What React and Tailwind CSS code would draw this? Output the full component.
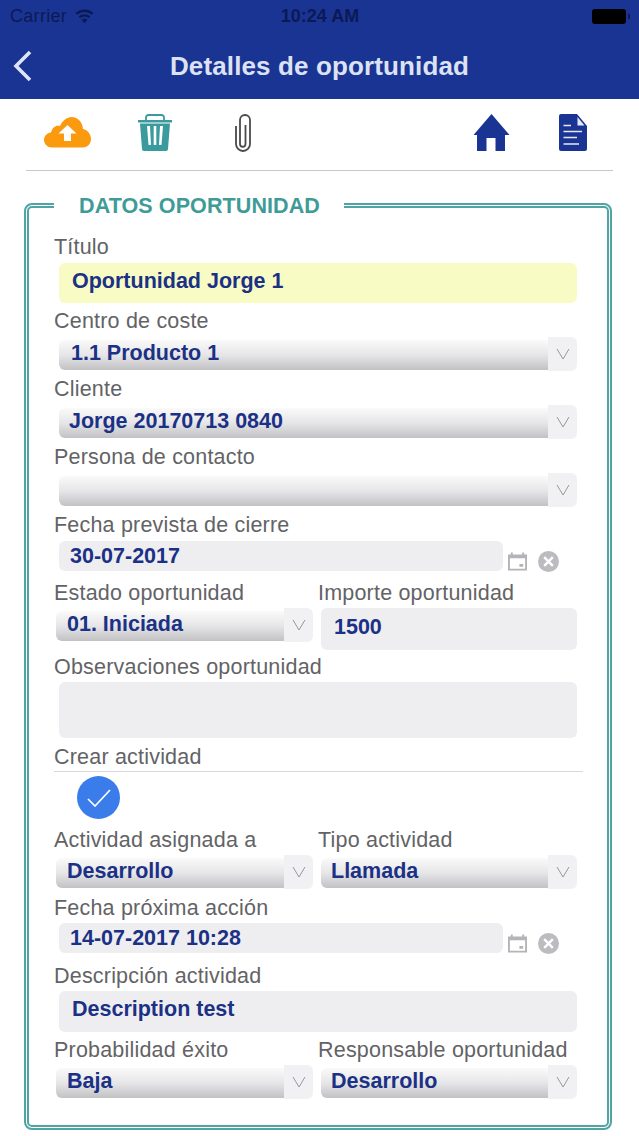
import React from 'react';

const Chevron = () => (
  <svg width="14" height="12" viewBox="0 0 14 12" fill="none" stroke="#97979c" strokeWidth="1">
    <path d="M1 1l6 10 6-10" />
  </svg>
);

const Label = ({ children, className = 'h-[34px] pt-[2px]' }) => (
  <div className={`flex items-center whitespace-nowrap text-[21.5px] tracking-[0.2px] text-[#636366] ${className}`}>{children}</div>
);

// gradient bar with the lighter chevron block on the right
const Select = ({ value, className = '', textClass = 'pl-3' }) => (
  <div className={`flex h-[34px] ${className}`}>
    <div className={`mb-[1px] mt-[3px] flex flex-1 items-center rounded-l-[6px] bg-gradient-to-b from-[#fafafa] via-[#e6e6e8] to-[#c2c2c5] pb-[4px] text-[21.5px] font-bold text-[#1b3185] ${textClass}`}>
      {value}
    </div>
    <div className="flex w-[29px] items-center justify-center rounded-r-[6px] bg-[#f1f0f3]">
      <Chevron />
    </div>
  </div>
);

const Input = ({ value, className = '', textClass = 'pl-[13px] pb-[4px]' }) => (
  <div className={`flex items-center rounded-[6px] bg-[#eeedf0] text-[21.5px] font-bold text-[#1b3185] ${textClass} ${className}`}>
    {value}
  </div>
);

const DateRow = ({ value }) => (
  <div className="flex h-[34px] items-start">
    <Input value={value} className="ml-[5px] h-[30px] w-[444px]" textClass="pl-[11px]" />
    <svg className="ml-[5px] mt-[11px]" width="19" height="19" viewBox="0 0 20 19" fill="#b4b4b8">
      <path d="M3 0h2v2h10V0h2v2h3v17H0V2h3zM2 6v11h16V6zm10 6h4v3h-4z" fillRule="evenodd" />
    </svg>
    <svg className="ml-[11px] mt-[10px]" width="21" height="21" viewBox="0 0 22 22">
      <circle cx="11" cy="11" r="11" fill="#bcbcc0" />
      <path d="M6.5 6.5l9 9M15.5 6.5l-9 9" stroke="#fff" strokeWidth="2.6" />
    </svg>
  </div>
);

export default function App() {
  return (
    <div className="h-[1136px] w-[639px] overflow-hidden bg-white font-['Liberation_Sans',Arial,sans-serif]">
      <header className="h-[99px] bg-[#1a3494]">
        <div className="grid h-[33px] grid-cols-3 items-center pl-[10px] pr-[9px] text-[#0b1a55]">
          <div className="flex items-center gap-[8px] text-[18px] tracking-[0.3px]">
            Carrier
            <svg width="19" height="15" viewBox="0 0 20 15" fill="#0b1a55">
              <path d="M10 14.5L7 11a4.4 4.4 0 0 1 6 0zM5.4 9.2L3.8 7.4a9.4 9.4 0 0 1 12.4 0l-1.6 1.8a7 7 0 0 0-9.2 0zM2.4 5.700L.6 3.800a14 14 0 0 1 18.800 0l-1.800 1.900a11.500 11.500 0 0 0-15.200 0z" />
            </svg>
          </div>
          <div className="text-center text-[18px] font-bold">10:24 AM</div>
          <div className="flex items-center justify-end">
            <div className="h-[15px] w-[34px] rounded-[3px] bg-black" />
            <div className="ml-[2px] h-[5px] w-[2px] bg-[#0b1a55]" />
          </div>
        </div>
        <div className="relative flex h-[66px] items-center justify-center">
          <svg className="absolute left-[12px] top-[17px]" width="20" height="32" viewBox="0 0 20 32" fill="none" stroke="#dfe4f4" strokeWidth="3.6">
            <path d="M18 2L4 16l14 14" />
          </svg>
          <div className="text-[26px] font-bold tracking-[0.13px] text-[#dde2f3]">Detalles de oportunidad</div>
        </div>
      </header>

      <div className="mx-[26px] flex h-[72px] items-start border-b border-[#c8c8c8] pt-[15px]">
        <svg className="ml-[18px] mt-[3px]" width="47" height="31" viewBox="0 0 47 31">
          <path d="M8 30.500C3.500 30.500 0 27 0 23c0-4 3-7 7-7.500C8.500 10 12 8 16 9 18.500 3.500 23 0 27.500 0 34 0 38.500 5 39 12c4.500 1 8 5 8 10 0 5-4 8.500-8.500 8.500z" fill="#fb9a0e" />
          <path d="M23.500 8L14.500 16.500h5.500v7.500h7v-7.500h5.500z" fill="#fff" />
        </svg>
        <svg className="ml-[46px]" width="36" height="37" viewBox="0 0 36 37" fill="#3a9a9e">
          <path d="M9 6V3.500A2.500 2.500 0 0 1 11.500 1h13A2.500 2.500 0 0 1 27 3.500V6" fill="none" stroke="#3a9a9e" strokeWidth="1.800" />
          <path d="M1 6h34v2.500H1z" />
          <path d="M3 9.500h30l-2 25.500a2 2 0 0 1-2 2H7a2 2 0 0 1-2-2zM10 12l1.500 19h2.500L13 12zm6.700 0v19h2.600V12zM23 12l-1 19h2.500l1.500-19z" fillRule="evenodd" />
        </svg>
        <svg className="ml-[62px]" width="18" height="38" viewBox="0 0 18 38" fill="none" stroke="#4a4a4c" strokeWidth="1.800">
          <path d="M10.500 11V30a2.750 2.750 0 0 1-5.500 0V6a5 5 0 0 1 10 0V30a7 7 0 0 1-14 0V12" />
        </svg>
        <svg className="ml-[220px]" width="37" height="37" viewBox="0 0 37 37" fill="#1a3494">
          <path d="M18.500 0L36.500 21H32V37H22.500V24h-9V37H4V21H.5z" />
        </svg>
        <svg className="ml-[49px]" width="28" height="37" viewBox="0 0 28 37">
          <path d="M2 0h16l10 12v23a2 2 0 0 1-2 2H2a2 2 0 0 1-2-2V2a2 2 0 0 1 2-2z" fill="#1a3494" />
          <path d="M18.500 3l7 8.500h-7z" fill="#e6e9f5" />
          <path d="M4.500 11.500h7.500M4.500 17.500h18.500M4.500 23.500h13.500M4.500 30h15.500" stroke="#e6e9f5" strokeWidth="1.600" />
        </svg>
      </div>

      <fieldset className="ml-[24px] mt-[22px] h-[937px] w-[588px] rounded-[8px] border-[5px] border-double border-[#4ea5a3] pl-[25px]">
        <legend className="h-[24px] w-[290px] pl-[25px] pt-[1px] text-left text-[21.5px] font-bold leading-[24px] tracking-[0.1px] text-[#3f9b97]">
          DATOS OPORTUNIDAD
        </legend>
        <div className="pt-[13px]">
          <Label className="h-[33px] pt-[2px]">Título</Label>
          <Input value="Oportunidad Jorge 1" className="ml-[5px] h-[40px] w-[518px] bg-[#f9fbc4]" />

          <Label>Centro de coste</Label>
          <Select value="1.1 Producto 1" className="ml-[5px] w-[518px]" />
          <Label>Cliente</Label>
          <Select value="Jorge 20170713 0840" className="ml-[5px] w-[518px]" textClass="pl-[10px]" />
          <Label>Persona de contacto</Label>
          <Select value="" className="ml-[5px] w-[518px]" />
          <Label>Fecha prevista de cierre</Label>
          <DateRow value="30-07-2017" />

          <div className="grid grid-cols-[264px_1fr]">
            <div>
              <Label className="h-[33px] pt-[4px]">Estado oportunidad</Label>
              <Select value="01. Iniciada" className="ml-[2px] w-[257px]" textClass="pl-[11px]" />
            </div>
            <div>
              <Label className="h-[33px] pt-[4px]">Importe oportunidad</Label>
              <Input value="1500" className="ml-[3px] h-[42px] w-[256px]" />
            </div>
          </div>

          <Label className="h-[32px] pt-[2px]">Observaciones oportunidad</Label>
          <Input value="" className="ml-[5px] h-[56px] w-[518px]" />

          <Label className="h-[33px] pt-[6px]">Crear actividad</Label>
          <div className="h-[1px] w-[529px] bg-[#d9d9dc]" />
          <div className="ml-[23px] mt-[4px] flex h-[43px] w-[43px] items-center justify-center rounded-full bg-[#3a7dea]">
            <svg width="24" height="18" viewBox="0 0 24 18" fill="none" stroke="#fff" strokeWidth="1.700">
              <path d="M1 10l7 7L23 1" />
            </svg>
          </div>

          <div className="mt-[3px] grid grid-cols-[264px_1fr]">
            <div>
              <Label className="h-[33px] pt-[4px]">Actividad asignada a</Label>
              <Select value="Desarrollo" className="ml-[2px] w-[257px]" textClass="pl-[11px]" />
            </div>
            <div>
              <Label className="h-[33px] pt-[4px]">Tipo actividad</Label>
              <Select value="Llamada" className="ml-[3px] w-[256px]" textClass="pl-[10px]" />
            </div>
          </div>

          <Label className="h-[34px] pt-[4px]">Fecha próxima acción</Label>
          <DateRow value="14-07-2017 10:28" />
          <Label className="h-[34px] pt-[4px]">Descripción actividad</Label>
          <Input value="Description test" className="ml-[5px] h-[41px] w-[518px]" />

          <div className="grid grid-cols-[264px_1fr]">
            <div>
              <Label className="h-[33px] pt-[4px]">Probabilidad éxito</Label>
              <Select value="Baja" className="ml-[2px] w-[257px]" textClass="pl-[11px]" />
            </div>
            <div>
              <Label className="h-[33px] pt-[4px]">Responsable oportunidad</Label>
              <Select value="Desarrollo" className="ml-[3px] w-[256px]" textClass="pl-[10px]" />
            </div>
          </div>
        </div>
      </fieldset>
    </div>
  );
}
